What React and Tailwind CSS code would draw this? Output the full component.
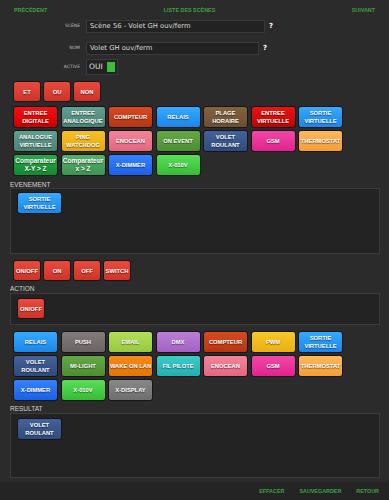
import React from "react";

const COLORS = {
  red: "bg-linear-to-b from-[#e94a3e] to-[#cf3227]",
  digital: "bg-linear-to-b from-[#f51010] to-[#cc0000]",
  teal: "bg-linear-to-b from-[#62a092] to-[#4a8274]",
  compteur: "bg-linear-to-b from-[#d84a20] to-[#b83512]",
  blue: "bg-linear-to-b from-[#35aaff] to-[#1a86ea]",
  brown: "bg-linear-to-b from-[#84623f] to-[#6c4f30]",
  vred: "bg-linear-to-b from-[#ee1212] to-[#bb0606]",
  yellow: "bg-linear-to-b from-[#f5c125] to-[#e6a712]",
  pink: "bg-linear-to-b from-[#f4849a] to-[#e4667f]",
  green: "bg-linear-to-b from-[#64a846] to-[#4c8f32]",
  navy: "bg-linear-to-b from-[#44629a] to-[#2f4b7e]",
  magenta: "bg-linear-to-b from-[#f545a8] to-[#e0228c]",
  orange: "bg-linear-to-b from-[#ffb85c] to-[#f59d35]",
  cmp1: "bg-linear-to-b from-[#25a84a] to-[#138a30]",
  cmp2: "bg-linear-to-b from-[#55b068] to-[#3c9452]",
  xblue: "bg-linear-to-b from-[#3582ff] to-[#1b60e6]",
  xgreen: "bg-linear-to-b from-[#5ade58] to-[#34bc34]",
  gray: "bg-linear-to-b from-[#837b7b] to-[#6b6464]",
  lime: "bg-linear-to-b from-[#b2de5a] to-[#98c940]",
  purple: "bg-linear-to-b from-[#bd7dd8] to-[#a262c4]",
  pwm: "bg-linear-to-b from-[#f6c825] to-[#e9b012]",
  wake: "bg-linear-to-b from-[#f68a18] to-[#e47506]",
  cyan: "bg-linear-to-b from-[#3ccaca] to-[#22b0b0]",
  xgray: "bg-linear-to-b from-[#888888] to-[#6e6e6e]",
};

const events = [
  ["ENTREE DIGITALE", "digital"],
  ["ENTREE ANALOGIQUE", "teal"],
  ["COMPTEUR", "compteur"],
  ["RELAIS", "blue"],
  ["PLAGE HORAIRE", "brown"],
  ["ENTREE VIRTUELLE", "vred"],
  ["SORTIE VIRTUELLE", "blue"],
  ["ANALOGUE VIRTUELLE", "teal"],
  ["PING WATCHDOG", "yellow"],
  ["ENOCEAN", "pink"],
  ["ON EVENT", "green"],
  ["VOLET ROULANT", "navy"],
  ["GSM", "magenta"],
  ["THERMOSTAT", "orange"],
  ["Comparateur X-Y > Z", "cmp1", true],
  ["Comparateur x > Z", "cmp2", true],
  ["X-DIMMER", "xblue"],
  ["X-010V", "xgreen"],
];

const actions = [
  ["RELAIS", "blue"],
  ["PUSH", "gray"],
  ["EMAIL", "lime"],
  ["DMX", "purple"],
  ["COMPTEUR", "compteur"],
  ["PWM", "pwm"],
  ["SORTIE VIRTUELLE", "blue"],
  ["VOLET ROULANT", "navy"],
  ["MI-LIGHT", "green"],
  ["WAKE ON LAN", "wake"],
  ["FIL PILOTE", "cyan"],
  ["ENOCEAN", "pink"],
  ["GSM", "magenta"],
  ["THERMOSTAT", "orange"],
  ["X-DIMMER", "xblue"],
  ["X-010V", "xgreen"],
  ["X-DISPLAY", "xgray"],
];

const Btn = ({ label, color, small, mixed }) => (
  <div
    className={`${small ? "w-[28px] h-[21px]" : "w-[45px] h-[22px]"} ${COLORS[color]} rounded-[3px] border border-[#161616] flex items-center justify-center text-center text-white font-bold ${mixed ? "text-[6.5px]" : "text-[5.8px] uppercase"} leading-[8px] [text-shadow:0_1px_1px_rgba(0,0,0,0.55)]`}
  >
    {label}
  </div>
);

const Field = ({ label, children }) => (
  <div className="flex items-center">
    <div className="w-[80px] text-right text-[4.5px] uppercase text-[#bbbbbb]">
      {label}
    </div>
    <div className="ml-[6px] flex items-center">{children}</div>
  </div>
);

const SectionLabel = ({ children }) => (
  <div className="ml-[10px] text-[6.5px] leading-[7px] uppercase text-[#d4d4d4]">
    {children}
  </div>
);

export default function App() {
  return (
    <div
      className="w-[389px] h-[500px] bg-[#2b2b2b] flex flex-col overflow-hidden"
      style={{ fontFamily: "'Liberation Sans', Arial, sans-serif" }}
    >
      {/* Navigation */}
      <div className="flex items-center px-[14px] pt-[6px] h-[14px] text-[5.4px] font-semibold text-[#3fa23f] uppercase">
        <span className="w-[40px]">Précédent</span>
        <span className="flex-1 text-center pr-[10px]">Liste des scènes</span>
        <span className="w-[40px] text-right">Suivant</span>
      </div>

      {/* Form */}
      <div
        className="mt-[6px] flex flex-col"
        style={{ fontFamily: "'DejaVu Sans', Verdana, sans-serif" }}
      >
        <Field label="Scène">
          <div className="w-[179px] h-[13px] bg-[#222222] border border-[#3a3a3a] text-[6.8px] text-[#dddddd] flex items-center px-[3px]">
            Scène 56 - Volet GH ouv/ferm
          </div>
          <span className="ml-[4px] text-[7px] font-bold text-white">?</span>
        </Field>
        <div className="h-[9px]" />
        <Field label="Nom">
          <div className="w-[173px] h-[13px] bg-[#222222] border border-[#3a3a3a] text-[6.8px] text-[#dddddd] flex items-center px-[3px]">
            Volet GH ouv/ferm
          </div>
          <span className="ml-[4px] text-[7px] font-bold text-white">?</span>
        </Field>
        <div className="h-[4px]" />
        <Field label="Active">
          <div className="w-[32px] h-[16px] bg-[#222222] border border-[#3a3a3a] flex items-center px-[2px] gap-[4px]">
            <span className="text-[7.5px] text-[#e0e0e0]">OUI</span>
            <span className="w-[10px] h-[10px] bg-[#3dbb3d]" />
          </div>
        </Field>
      </div>

      {/* Logic buttons */}
      <div className="mt-[6px] ml-[13px] flex gap-[2px]">
        <Btn label="ET" color="red" small />
        <Btn label="OU" color="red" small />
        <Btn label="NON" color="red" small />
      </div>

      {/* Events grid */}
      <div className="mt-[4px] ml-[13px] grid grid-cols-[repeat(7,45px)] gap-x-[2.5px] gap-y-[2px]">
        {events.map(([l, c, m], i) => (
          <Btn key={i} label={l} color={c} mixed={m} />
        ))}
      </div>

      <div className="mt-[5px]">
        <SectionLabel>Evenement</SectionLabel>
      </div>
      <div className="mt-[0px] ml-[10px] w-[370px] h-[66px] bg-[#232323] border border-[#3b3b3b] pl-[6px] pt-[3px]">
        <Btn label="SORTIE VIRTUELLE" color="blue" />
      </div>

      {/* Action types */}
      <div className="mt-[6px] ml-[13px] flex gap-[2px]">
        <Btn label="ON/OFF" color="red" small />
        <Btn label="ON" color="red" small />
        <Btn label="OFF" color="red" small />
        <Btn label="SWITCH" color="red" small />
      </div>

      <div className="mt-[4px]">
        <SectionLabel>Action</SectionLabel>
      </div>
      <div className="mt-[1px] ml-[10px] w-[370px] h-[32px] bg-[#232323] border border-[#3b3b3b] pl-[6px] pt-[4px]">
        <Btn label="ON/OFF" color="red" small />
      </div>

      {/* Actions grid */}
      <div className="mt-[6px] ml-[13px] grid grid-cols-[repeat(7,45px)] gap-x-[2.5px] gap-y-[2px]">
        {actions.map(([l, c], i) => (
          <Btn key={i} label={l} color={c} />
        ))}
      </div>

      <div className="mt-[4px]">
        <SectionLabel>Resultat</SectionLabel>
      </div>
      <div className="mt-[1px] ml-[10px] w-[370px] h-[65px] bg-[#232323] border border-[#3b3b3b] pl-[6px] pt-[4px]">
        <Btn label="VOLET ROULANT" color="navy" />
      </div>

      {/* Footer */}
      <div className="mt-auto h-[18px] bg-[#242424] flex items-center justify-end gap-[15px] pr-[10px] text-[5.4px] font-semibold text-[#3fa23f] uppercase">
        <span>Effacer</span>
        <span>Sauvegarder</span>
        <span>Retour</span>
      </div>
    </div>
  );
}
